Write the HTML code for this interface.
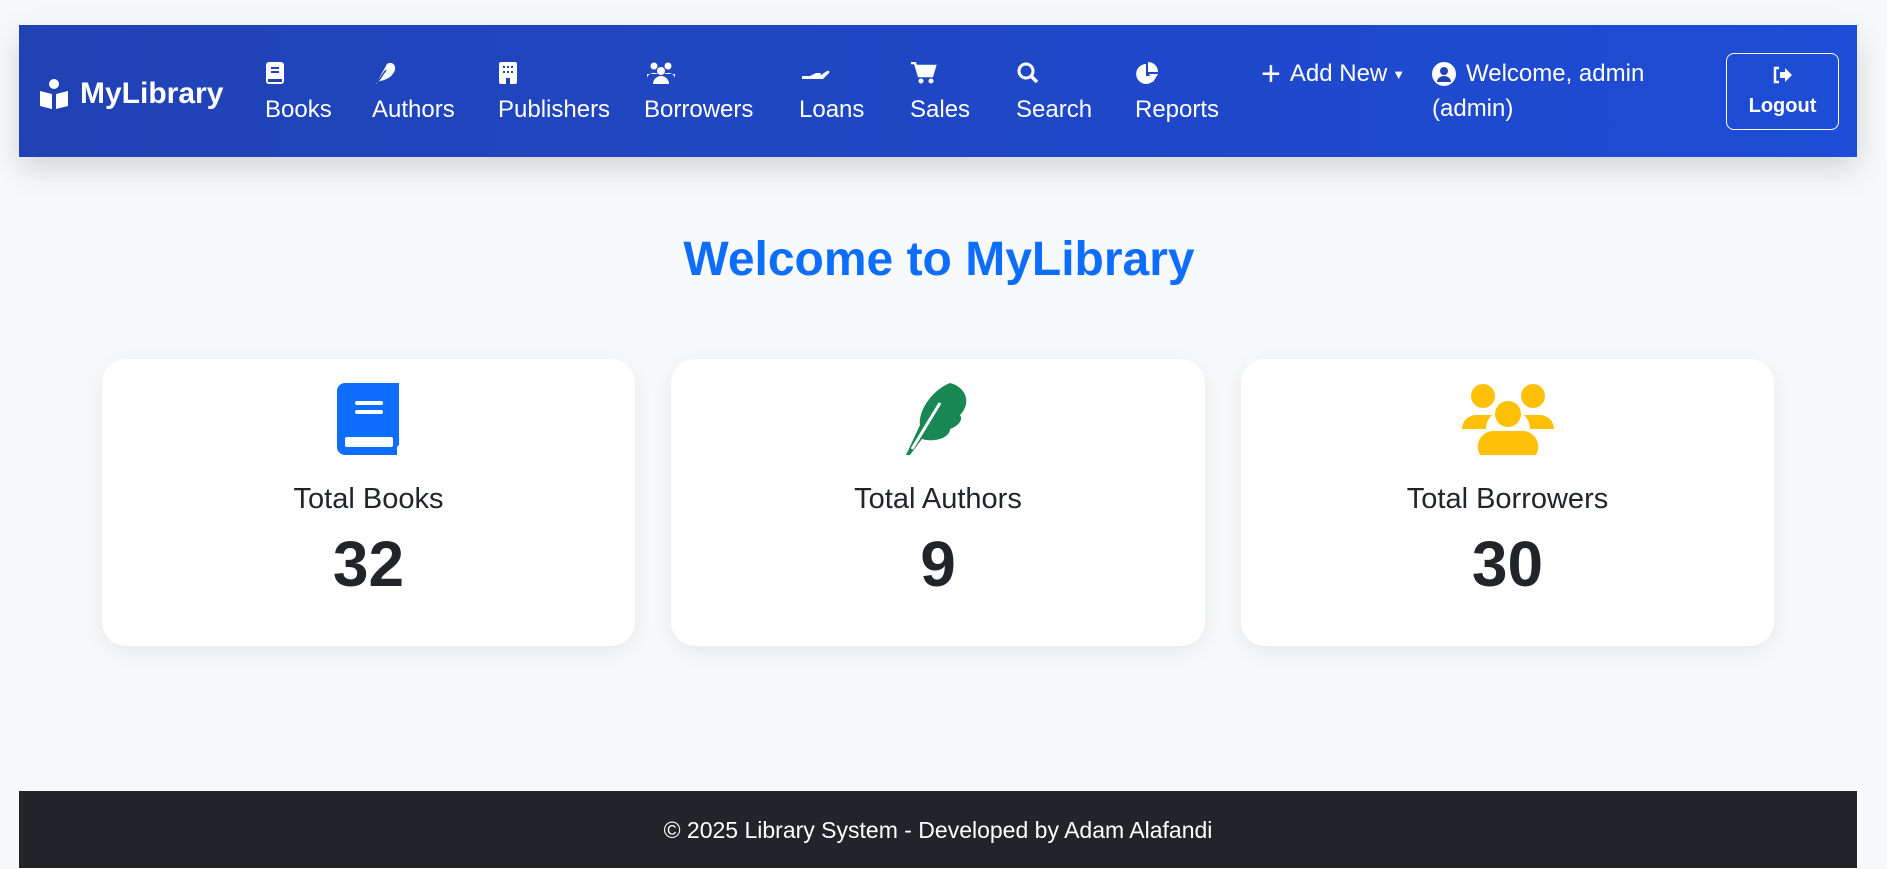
<!DOCTYPE html>
<html><head><meta charset="utf-8"><style>
*{box-sizing:border-box;margin:0;padding:0}
body{width:1887px;height:868px;background:#f8f9fa;font-family:"Liberation Sans",sans-serif;position:relative;overflow:hidden;color:#212529}
.nav{position:absolute;left:19px;top:25px;width:1838px;height:132px;background:linear-gradient(90deg,#2142b4,#1d4cd6);box-shadow:0 12px 30px rgba(0,0,0,.15);color:#fff}
.abs{position:absolute}
.brand{left:19px;top:52px;font-size:30px;font-weight:bold;display:flex;align-items:center;gap:10px}
.item{position:absolute;top:37px;font-size:24px;line-height:30px}
.item svg{display:block;margin-bottom:11px;margin-left:1px}
.top{top:34px;font-size:24px;display:flex;align-items:center;height:30px}
.logout{left:1707px;top:28px;width:113px;height:77px;border:1px solid #fff;border-radius:8px;text-align:center;font-weight:bold;font-size:20px}
h1{position:absolute;left:0;width:1878px;top:232px;text-align:center;color:#0d6efd;font-size:48px;font-weight:bold}
.card{position:absolute;top:359px;height:287px;background:#fff;border-radius:24px;box-shadow:0 6px 20px rgba(0,0,0,.07);text-align:center}
.card svg{position:absolute;left:50%;top:24px;transform:translateX(-50%)}
.card .l{position:absolute;width:100%;top:124px;font-size:29px}
.card .n{position:absolute;width:100%;top:168px;font-size:64px;font-weight:bold}
.foot{position:absolute;left:19px;top:791px;width:1838px;height:77px;background:#212529;color:#fff;text-align:center;font-size:23px;line-height:78px}
</style></head><body>
<div class="nav">
 <div class="abs brand"><svg width="32" height="32" viewBox="0 0 32 32" fill="#fff"><circle cx="16" cy="6" r="5"/><path d="M2 13l12 3v15L2 28z M30 13l-12 3v15l12-3z"/></svg>MyLibrary</div>
 <div class="item" style="left:246px"><svg width="20" height="22" viewBox="0 0 20 22"><rect x="0" y="0" width="18" height="22" rx="3" fill="#fff"/><rect x="5" y="5" width="8" height="2" fill="#2142b4"/><rect x="5" y="9" width="8" height="2" fill="#2142b4"/><rect x="2" y="17" width="14" height="3" fill="#2142b4"/></svg>Books</div>
 <div class="item" style="left:353px"><svg width="24" height="22" viewBox="0 0 24 22"><path d="M3 22L14 2c4-3 9 0 8 6-2 6-8 10-15 11z" fill="#fff"/><path d="M4 21l9-13" stroke="#2142b4" stroke-width="1.5"/></svg>Authors</div>
 <div class="item" style="left:479px"><svg width="18" height="22" viewBox="0 0 18 22"><rect width="18" height="22" rx="2" fill="#fff"/><g fill="#2142b4"><rect x="4" y="4" width="2" height="2"/><rect x="8" y="4" width="2" height="2"/><rect x="12" y="4" width="2" height="2"/><rect x="4" y="9" width="2" height="2"/><rect x="8" y="9" width="2" height="2"/><rect x="12" y="9" width="2" height="2"/><rect x="7" y="16" width="4" height="6"/></g></svg>Publishers</div>
 <div class="item" style="left:625px"><svg width="32" height="22" viewBox="0 0 32 22" fill="#fff"><circle cx="9" cy="4" r="3.5"/><circle cx="23" cy="4" r="3.5"/><circle cx="16" cy="9" r="4"/><path d="M2 16a7 6 0 0 1 11-4H2z M30 16a7 6 0 0 0-11-4h11z M8 22a8 8 0 0 1 16 0z"/></svg>Borrowers</div>
 <div class="item" style="left:780px"><svg width="30" height="22" viewBox="0 0 30 22" fill="#fff"><path d="M2 14h8l6-3h4c1 0 1 2 0 2h-5 6l6-4c2-1 3 1 2 2l-6 6H2z"/></svg>Loans</div>
 <div class="item" style="left:891px"><svg width="26" height="22" viewBox="0 0 26 22" fill="#fff"><path d="M0 1h4l4 13h13l3-10H6" stroke="#fff" stroke-width="2.5" fill="none"/><path d="M6 4h18l-3 10H9z"/><circle cx="10" cy="19" r="2.5"/><circle cx="20" cy="19" r="2.5"/></svg>Sales</div>
 <div class="item" style="left:997px"><svg width="24" height="22" viewBox="0 0 24 22"><circle cx="9" cy="9" r="7" stroke="#fff" stroke-width="3" fill="none"/><path d="M14 14l6 6" stroke="#fff" stroke-width="3.5"/></svg>Search</div>
 <div class="item" style="left:1116px"><svg width="24" height="22" viewBox="0 0 24 22" fill="#fff"><path d="M10 2a10 10 0 1 0 10 12H10z"/><path d="M12 0v10h10A10 10 0 0 0 12 0z"/><path d="M13 12h9l-5 8z"/></svg>Reports</div>
 <div class="abs top" style="left:1242px"><span style="font-size:34px;margin-right:9px;line-height:24px">+</span>Add New<span style="font-size:13px;margin-left:5px">▼</span></div>
 <div class="abs top" style="left:1413px"><svg width="24" height="24" viewBox="0 0 24 24" style="margin-right:10px"><circle cx="12" cy="12" r="12" fill="#fff"/><circle cx="12" cy="9" r="4" fill="#2142b4"/><path d="M5 20a7 6 0 0 1 14 0" fill="#2142b4"/></svg>Welcome, admin</div>
 <div class="abs" style="left:1413px;top:70px;font-size:24px">(admin)</div>
 <div class="abs logout"><svg width="22" height="18" viewBox="0 0 22 18" style="margin-top:12px"><path d="M7 2H3v14h4" stroke="#fff" stroke-width="2.5" fill="none"/><path d="M8 6h5V2l7 7-7 7v-4H8z" fill="#fff"/></svg><div style="margin-top:5px">Logout</div></div>
</div>
<h1>Welcome to MyLibrary</h1>
<div class="card" style="left:102px;width:533px"><svg width="64" height="72" viewBox="0 0 64 72"><path d="M8 0h54v62l-2 2v8H8a8 8 0 0 1-8-8V8a8 8 0 0 1 8-8z" fill="#0d6efd"/><rect x="18" y="18" width="28" height="4" rx="2" fill="#fff"/><rect x="18" y="27" width="28" height="4" rx="2" fill="#fff"/><rect x="8" y="54" width="48" height="10" rx="2" fill="#fff"/></svg><div class="l">Total Books</div><div class="n">32</div></div>
<div class="card" style="left:671px;width:534px"><svg width="72" height="72" viewBox="0 0 72 72"><path d="M4 72L18 42C16 30 28 8 48 0c16 4 22 20 10 32 4 6-4 12-10 14 0 8-14 14-28 10L8 72z" fill="#198754"/><path d="M10 66L38 20" stroke="#fff" stroke-width="3"/></svg><div class="l">Total Authors</div><div class="n">9</div></div>
<div class="card" style="left:1241px;width:533px"><svg width="92" height="72" viewBox="0 0 92 72" fill="#ffc107"><circle cx="21" cy="13" r="12"/><circle cx="71" cy="13" r="12"/><circle cx="46" cy="31" r="13"/><path d="M0 46a14 14 0 0 1 14-14h16c-4 4-6 9-6 14z M92 46a14 14 0 0 0-14-14H62c4 4 6 9 6 14z M18 72a16 16 0 0 1 16-24h24a16 16 0 0 1 16 24z"/></svg><div class="l">Total Borrowers</div><div class="n">30</div></div>
<div class="foot">© 2025 Library System - Developed by Adam Alafandi</div>
</body></html>
